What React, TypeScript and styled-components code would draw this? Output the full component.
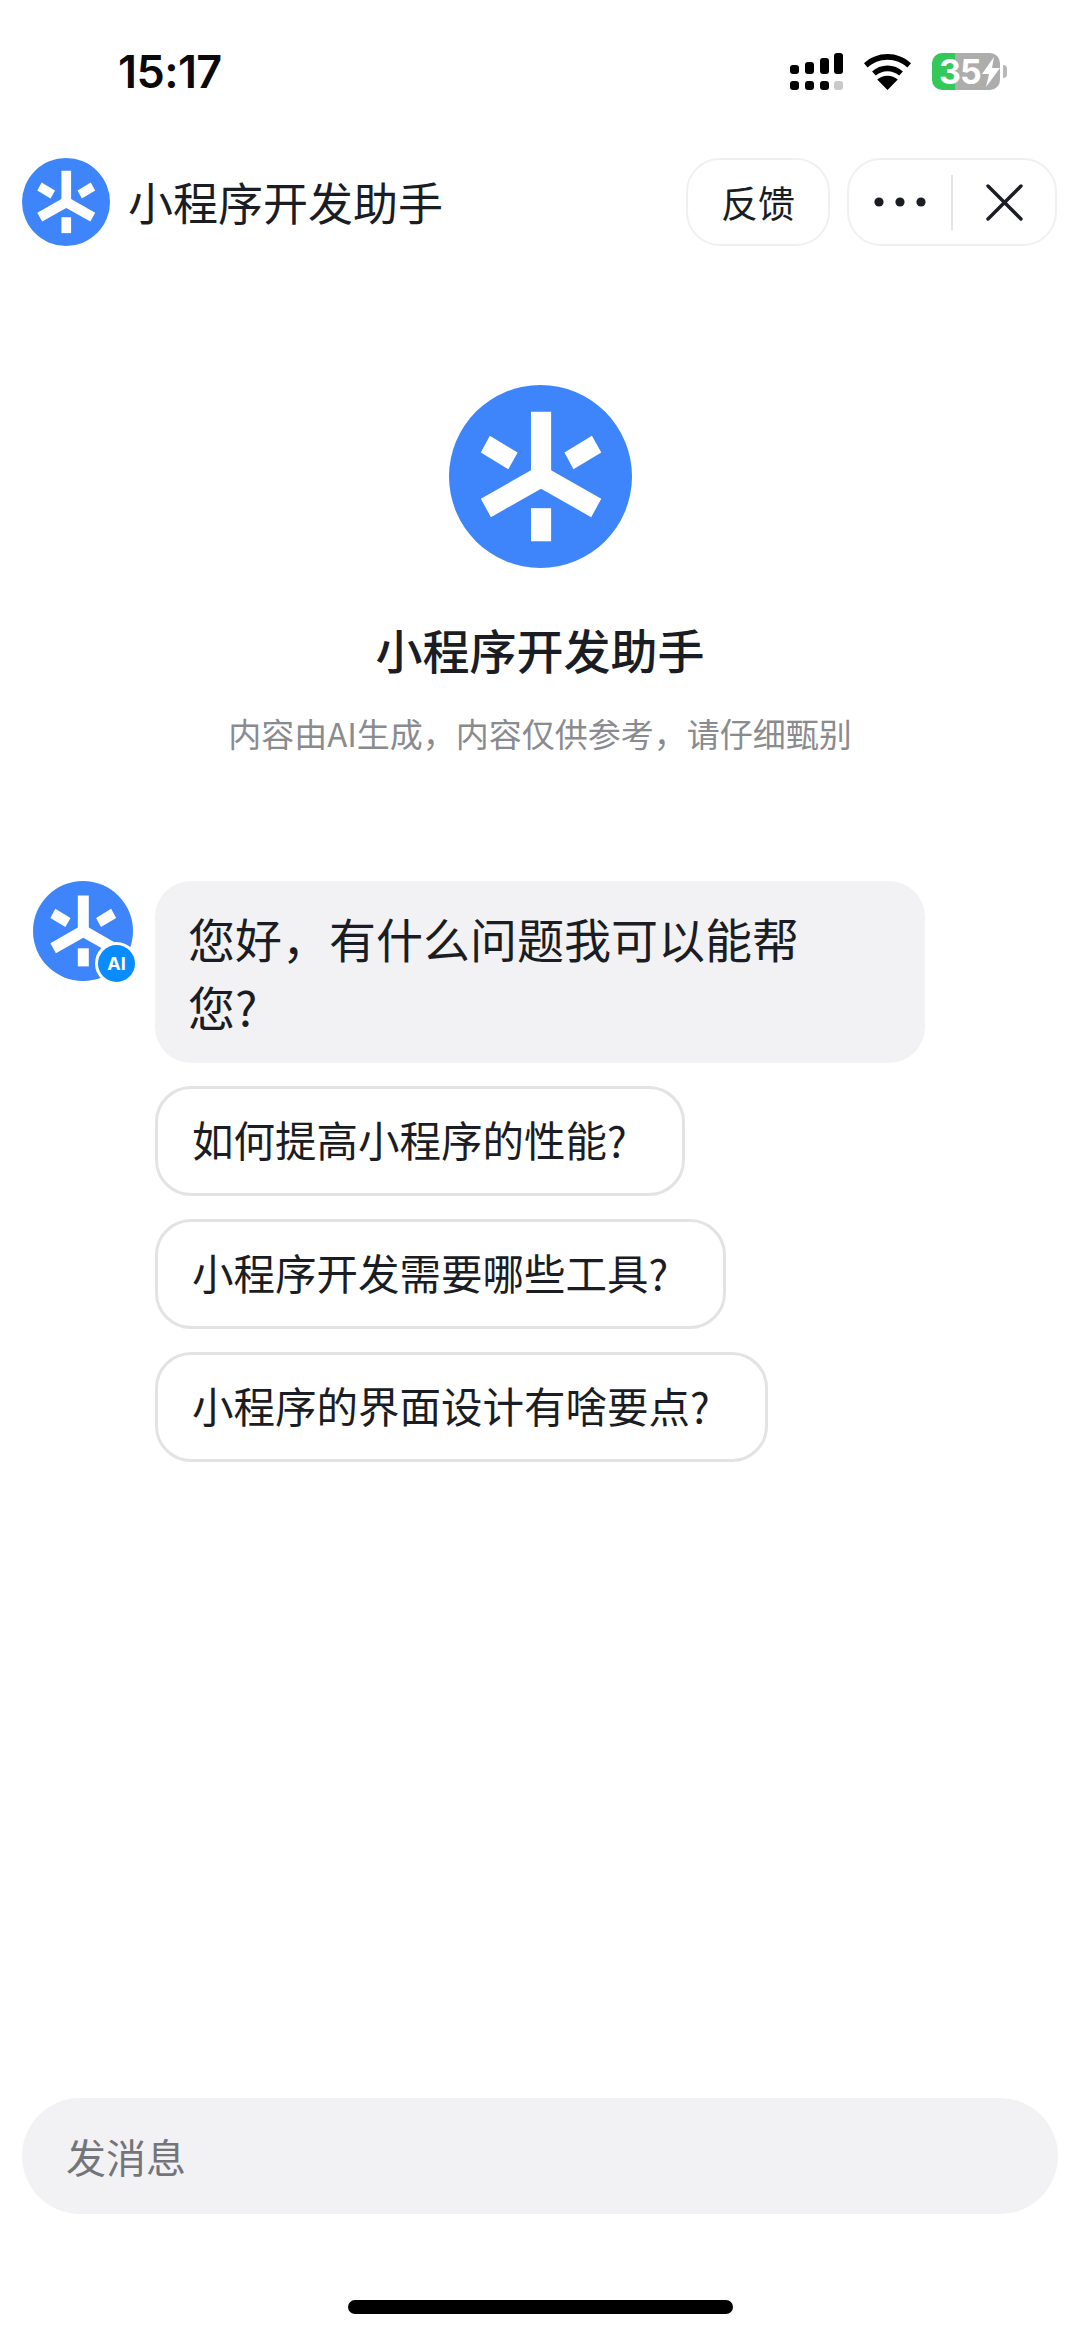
import React from "react";
import styled, { createGlobalStyle } from "styled-components";

const Global = createGlobalStyle`
  html, body { margin: 0; padding: 0; background: #fff; }
  * { box-sizing: border-box; }
  body { font-family: "Noto Sans CJK SC", "Noto Sans", sans-serif; color: #1b1d24; }
`;

const Page = styled.div`
  width: 1080px;
  height: 2337px;
  display: flex;
  flex-direction: column;
  overflow: hidden;
  background: #fff;
`;

const StatusBar = styled.div`
  height: 158px;
  padding: 53px 73px 0 118px;
  display: flex;
  justify-content: space-between;
  align-items: flex-start;
`;

const Time = styled.div`
  font-family: Inter, "Liberation Sans", sans-serif;
  font-size: 45px;
  font-weight: 600;
  line-height: 38px;
  color: #0a0a0a;
  letter-spacing: -0.6px;
`;

const StatusIcons = styled.div`
  display: flex;
  align-items: flex-start;
  width: 217px;
`;

const Battery = styled.div`
  width: 68px;
  height: 37px;
  margin-left: 21px;
  border-radius: 10px;
  background: linear-gradient(to right, #34c759 34%, #adadad 34%);
  color: #fff;
  font-family: Inter, "Liberation Sans", sans-serif;
  font-weight: 700;
  font-size: 34px;
  line-height: 37px;
  display: flex;
  align-items: center;
  padding-left: 7px;
  position: relative;
  letter-spacing: -1px;
`;

const BatteryNub = styled.div`
  position: absolute;
  right: -7px;
  top: 12px;
  width: 4px;
  height: 13px;
  border-radius: 0 4px 4px 0;
  background: #b8b8b8;
`;

const Header = styled.header`
  height: 88px;
  padding: 0 23px 0 22px;
  display: flex;
  align-items: center;
`;

const TitleText = styled.div`
  margin-left: 18px;
  font-size: 45px;
  line-height: 88px;
  flex: 1;
`;

const Pill = styled.div`
  height: 88px;
  border: 2px solid #f0f0f0;
  border-radius: 34px;
  display: flex;
  align-items: center;
  background: #fff;
`;

const FeedbackPill = styled(Pill)`
  width: 144px;
  justify-content: center;
  font-size: 37px;
  margin-right: 17px;
`;

const Capsule = styled(Pill)`
  width: 210px;
`;

const CapsuleCell = styled.div`
  flex: 1;
  display: flex;
  justify-content: center;
  align-items: center;
`;

const CapsuleDivider = styled.div`
  width: 2px;
  height: 55px;
  background: #e4e4e4;
`;

const Intro = styled.section`
  margin-top: 139px;
  display: flex;
  flex-direction: column;
  align-items: center;
`;

const IntroTitle = styled.h1`
  margin: 48px 0 0;
  font-size: 47px;
  font-weight: 500;
  line-height: 66px;
`;

const IntroNote = styled.p`
  margin: 28px 0 0;
  font-size: 33px;
  line-height: 46px;
  color: #8a8b8f;
`;

const Chat = styled.section`
  margin-top: 125px;
  padding-left: 33px;
  display: flex;
  gap: 22px;
  align-items: flex-start;
`;

const AvatarWrap = styled.div`
  position: relative;
  width: 100px;
  height: 100px;
  flex: none;
`;

const AiBadge = styled.div`
  position: absolute;
  right: -2px;
  bottom: -1px;
  width: 37px;
  height: 37px;
  border-radius: 50%;
  background: #0a8cff;
  box-shadow: 0 0 0 3px #fff;
  color: #fff;
  font-family: Inter, "Liberation Sans", sans-serif;
  font-size: 18px;
  font-weight: 700;
  display: flex;
  align-items: center;
  justify-content: center;
`;

const Messages = styled.div`
  display: flex;
  flex-direction: column;
  align-items: flex-start;
`;

const Bubble = styled.div`
  width: 770px;
  height: 182px;
  padding: 23px 33px;
  border-radius: 36px;
  background: #f2f2f4;
  font-size: 47px;
  line-height: 68px;
  color: #1b1d24;
`;

const Suggestions = styled.div`
  margin-top: 23px;
  display: flex;
  flex-direction: column;
  align-items: flex-start;
  gap: 23px;
`;

const Suggestion = styled.div`
  height: 110px;
  padding: 0 55px 0 34px;
  border: 3px solid #e3e3e3;
  border-radius: 36px;
  background: #fff;
  font-size: 41.5px;
  line-height: 100px;
  white-space: nowrap;
`;

const Composer = styled.div`
  margin: auto 22px 0;
  height: 116px;
  padding-left: 44px;
  border-radius: 58px;
  background: #f2f2f4;
  display: flex;
  align-items: center;
  font-size: 40px;
  color: #74757a;
`;

const HomeBar = styled.div`
  width: 385px;
  height: 14px;
  margin: 86px auto 23px;
  border-radius: 7px;
  background: #000;
`;

const Logo = ({ size }: { size: number }) => (
  <svg width={size} height={size} viewBox="0 0 100 100" style={{ flex: "none", display: "block" }}>
    <circle cx="50" cy="50" r="50" fill="#3e85fb" />
    <g fill="#fff">
      <polygon points="44.8,14.6 55.8,14.6 55.8,46.6 83.2,62.2 77.7,72.2 50.3,56.7 22.9,72.2 17.4,62.2 44.8,46.6" />
      <polygon points="22.3,27.8 37.5,36.9 32.4,46.1 17.4,36.9" />
      <polygon points="78.1,27.8 83.2,36.9 68,46.1 63.1,36.9" />
      <polygon points="44.8,67.3 55.8,67.3 55.8,85.4 44.8,85.4" />
    </g>
  </svg>
);

const SignalIcon = () => (
  <svg width="53" height="37" viewBox="0 0 53 37" style={{ display: "block", flex: "none" }}>
    <g fill="#000">
      <rect x="0" y="12" width="9" height="9" rx="3" />
      <rect x="15" y="9" width="9" height="12" rx="3" />
      <rect x="30" y="5" width="9" height="16" rx="3" />
      <rect x="44" y="0" width="9" height="21" rx="3" />
      <rect x="0" y="28" width="9" height="9" rx="3" />
      <rect x="15" y="28" width="9" height="9" rx="3" />
      <rect x="30" y="28" width="9" height="9" rx="3" />
    </g>
    <rect x="44" y="28" width="9" height="9" rx="3" fill="#c9c9c9" />
  </svg>
);

const WifiIcon = () => (
  <svg width="47" height="36" viewBox="0 0 47 36" style={{ display: "block", flex: "none", marginLeft: 21, marginTop: 1 }}>
    <path
      fill="#000"
      d="M23.5 0C14.5 0 6.3 3.4 0 9.2l3.6 4.2C8.9 8.6 15.9 5.7 23.5 5.7s14.6 2.9 19.9 7.7L47 9.2C40.7 3.4 32.5 0 23.5 0zM23.5 11.5c-5.9 0-11.3 2.2-15.4 5.9l3.7 4.2c3.1-2.7 7.2-4.4 11.7-4.4s8.6 1.7 11.7 4.4l3.7-4.2c-4.1-3.7-9.5-5.9-15.4-5.9zM13.2 25.4 23.5 36l10.3-10.6c-2.8-2.3-6.4-3.7-10.3-3.7s-7.5 1.4-10.3 3.7z"
    />
  </svg>
);

const BoltIcon = () => (
  <svg width="20" height="30" viewBox="0 0 20 30" style={{ flex: "none" }}>
    <path fill="#fff" d="M13 0 1 17h7l-3 13 14-19h-8z" />
  </svg>
);

const DotsIcon = () => (
  <svg width="52" height="12" viewBox="0 0 52 12">
    <circle cx="5" cy="6" r="4.6" fill="#1b1d24" />
    <circle cx="26" cy="6" r="4.6" fill="#1b1d24" />
    <circle cx="47" cy="6" r="4.6" fill="#1b1d24" />
  </svg>
);

const CloseIcon = () => (
  <svg width="37" height="37" viewBox="0 0 37 37">
    <path d="M2 2 35 35M35 2 2 35" stroke="#1b1d24" strokeWidth="3.4" strokeLinecap="round" />
  </svg>
);

export default function App() {
  return (
    <Page>
      <Global />
      <StatusBar>
        <Time>15:17</Time>
        <StatusIcons>
          <SignalIcon />
          <WifiIcon />
          <Battery>
            35
            <BoltIcon />
            <BatteryNub />
          </Battery>
        </StatusIcons>
      </StatusBar>
      <Header>
        <Logo size={88} />
        <TitleText>小程序开发助手</TitleText>
        <FeedbackPill>反馈</FeedbackPill>
        <Capsule>
          <CapsuleCell>
            <DotsIcon />
          </CapsuleCell>
          <CapsuleDivider />
          <CapsuleCell>
            <CloseIcon />
          </CapsuleCell>
        </Capsule>
      </Header>
      <Intro>
        <Logo size={183} />
        <IntroTitle>小程序开发助手</IntroTitle>
        <IntroNote>内容由AI生成，内容仅供参考，请仔细甄别</IntroNote>
      </Intro>
      <Chat>
        <AvatarWrap>
          <Logo size={100} />
          <AiBadge>AI</AiBadge>
        </AvatarWrap>
        <Messages>
          <Bubble>
            您好，有什么问题我可以能帮
            <br />
            您?
          </Bubble>
          <Suggestions>
            <Suggestion>如何提高小程序的性能?</Suggestion>
            <Suggestion>小程序开发需要哪些工具?</Suggestion>
            <Suggestion>小程序的界面设计有啥要点?</Suggestion>
          </Suggestions>
        </Messages>
      </Chat>
      <Composer>发消息</Composer>
      <HomeBar />
    </Page>
  );
}
